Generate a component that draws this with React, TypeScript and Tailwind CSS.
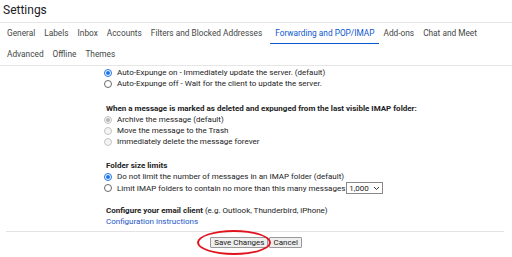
const tabsRow1 = ['General', 'Labels', 'Inbox', 'Accounts', 'Filters and Blocked Addresses', 'Forwarding and POP/IMAP', 'Add-ons', 'Chat and Meet']
const tabsRow2 = ['Advanced', 'Offline', 'Themes']

function Radio({ checked, disabled, label }: { checked?: boolean; disabled?: boolean; label: string }) {
  return (
    <div className="flex items-center h-[11px]">
      <span
        className={`w-[8px] h-[8px] rounded-full border flex items-center justify-center mr-[5px] ${
          disabled ? 'border-[#c4c4c4] bg-[#f4f4f4]' : checked ? 'border-[#1a73e8]' : 'border-[#6b6b6b]'
        }`}
      >
        {checked && <span className={`w-[4px] h-[4px] rounded-full ${disabled ? 'bg-[#b8b8b8]' : 'bg-[#1a73e8]'}`} />}
      </span>
      <span className="text-[#222]">{label}</span>
    </div>
  )
}

export default function App() {
  return (
    <div className="w-[512px] h-[257px] bg-white overflow-hidden font-['Roboto',sans-serif] relative">
      <div className="pl-[3px] pt-[3px] h-[22px] text-[12px] text-[#202124] leading-[15px]">Settings</div>
      <div className="border-t border-[#e6e6e6]">
        <div className="flex h-[21px] items-center pl-[7px] gap-x-[9px] text-[8.3px] text-[#444746]">
          {tabsRow1.map((t) => (
            <div
              key={t}
              className={`h-full flex items-center relative ${t === 'Forwarding and POP/IMAP' ? 'text-[#0b57d0] ml-[4px]' : ''}`}
            >
              {t}
              {t === 'Forwarding and POP/IMAP' && (
                <span className="absolute left-[-5px] right-[-5px] bottom-0 h-[1.5px] bg-[#0b57d0]" />
              )}
            </div>
          ))}
        </div>
        <div className="flex h-[21px] items-center pl-[7px] gap-x-[9px] text-[8.3px] text-[#444746]">
          {tabsRow2.map((t) => (
            <div key={t}>{t}</div>
          ))}
        </div>
      </div>
      <div className="border-t border-[#e6e6e6] pl-[104px] pt-[1px] text-[8px] leading-[11px]">
        <Radio checked label="Auto-Expunge on - Immediately update the server. (default)" />
        <Radio label="Auto-Expunge off - Wait for the client to update the server." />
        <div className="h-[14px]" />
        <div className="font-bold text-[#222] pl-[2px]">
          When a message is marked as deleted and expunged from the last visible IMAP folder:
        </div>
        <Radio checked disabled label="Archive the message (default)" />
        <Radio disabled label="Move the message to the Trash" />
        <Radio disabled label="Immediately delete the message forever" />
        <div className="h-[13px]" />
        <div className="font-bold text-[#222] pl-[2px]">Folder size limits</div>
        <Radio checked label="Do not limit the number of messages in an IMAP folder (default)" />
        <div className="flex items-center h-[12px]">
          <Radio label="Limit IMAP folders to contain no more than this many messages" />
          <div className="ml-[1px] w-[37px] h-[12px] border border-[#8a8a8a] flex items-center justify-between px-[2px] text-[#222]">
            <span>1,000</span>
            <svg width="7" height="5" viewBox="0 0 7 5">
              <path d="M1 1l2.5 2.5L6 1" fill="none" stroke="#333" strokeWidth="1" />
            </svg>
          </div>
        </div>
        <div className="h-[11px]" />
        <div className="text-[#222] pl-[2px]">
          <span className="font-bold">Configure your email client</span> (e.g. Outlook, Thunderbird, iPhone)
        </div>
        <div className="text-[#1a56c8] pl-[2px]">Configuration instructions</div>
      </div>
      <div className="mx-[6px] mt-[4px] border-t border-[#e3e3e3] w-[498px]" />
      <div className="flex justify-center gap-x-[1px] pt-[5px] text-[8px] text-[#222]">
        <div className="relative">
          <button className="h-[11px] px-[3px] border border-[#999] bg-[#efefef] leading-[9px] rounded-[1px]">
            Save Changes
          </button>
          <span className="absolute left-[-13px] top-[-7px] w-[74px] h-[25px] rounded-[50%] border-[2px] border-[#e0141e]" />
        </div>
        <button className="h-[11px] px-[3px] border border-[#999] bg-[#efefef] leading-[9px] rounded-[1px]">Cancel</button>
      </div>
    </div>
  )
}
